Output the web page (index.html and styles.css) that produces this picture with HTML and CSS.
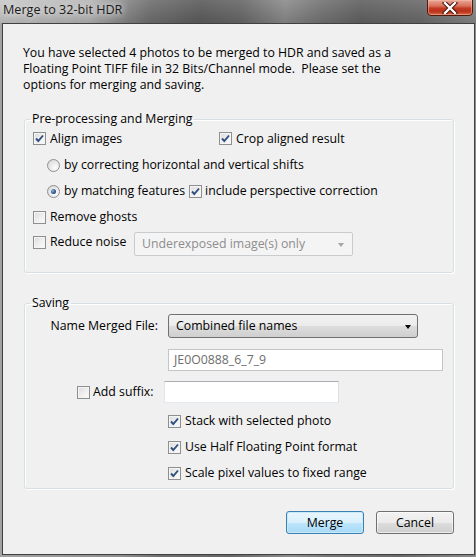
FILE: index.html
```html
<!DOCTYPE html>
<html lang="en">
<head>
    <meta charset="UTF-8">
    <title>Merge to 32-bit HDR</title>
    <link rel="stylesheet" href="styles.css">
</head>
<body>
    <div class="window">
        <div class="titlebar">
            <span class="title">Merge to 32-bit HDR</span>
            <span class="close">
                <svg width="16" height="12" viewBox="0 0 16 12">
                    <path d="M3 1 L13 11 M13 1 L3 11" stroke="#3a0c06" stroke-width="4.2" stroke-linecap="square"/>
                    <path d="M3 1 L13 11 M13 1 L3 11" stroke="#fff" stroke-width="2.4" stroke-linecap="square"/>
                </svg>
            </span>
        </div>

        <div class="client">
            <p class="intro">You have selected 4 photos to be merged to HDR and saved as a<br>Floating Point TIFF file in 32 Bits/Channel mode.&nbsp; Please set the<br>options for merging and saving.</p>

            <fieldset class="group group-merge">
                <legend>Pre-processing and Merging</legend>
                <div class="row row-first">
                    <label class="opt opt-align"><span class="cb"><svg width="11" height="11" viewBox="0 0 11 11"><path d="M2 5.5 L4.3 8 L9 2.5" fill="none" stroke="#2f4f7f" stroke-width="1.9"/></svg></span>Align images</label>
                    <label class="opt"><span class="cb"><svg width="11" height="11" viewBox="0 0 11 11"><path d="M2 5.5 L4.3 8 L9 2.5" fill="none" stroke="#2f4f7f" stroke-width="1.9"/></svg></span>Crop aligned result</label>
                </div>
                <div class="row indent">
                    <label class="opt"><span class="radio"></span>by correcting horizontal and vertical shifts</label>
                </div>
                <div class="row indent">
                    <label class="opt"><span class="radio on"></span>by matching features</label>
                    <label class="opt opt-persp"><span class="cb"><svg width="11" height="11" viewBox="0 0 11 11"><path d="M2 5.5 L4.3 8 L9 2.5" fill="none" stroke="#2f4f7f" stroke-width="1.9"/></svg></span>include perspective correction</label>
                </div>
                <div class="row">
                    <label class="opt"><span class="cb"></span>Remove ghosts</label>
                </div>
                <div class="row row-noise">
                    <label class="opt opt-noise"><span class="cb"></span>Reduce noise</label>
                    <div class="select disabled">Underexposed image(s) only<span class="arrow"></span></div>
                </div>
            </fieldset>

            <fieldset class="group group-save">
                <legend>Saving</legend>
                <div class="row row-name">
                    <span class="field-label">Name Merged File:</span>
                    <div class="select combo">Combined file names<span class="arrow"></span></div>
                </div>
                <div class="row row-file">
                    <div class="textbox readonly">JE0O0888_6_7_9</div>
                </div>
                <div class="row row-suffix">
                    <label class="opt opt-suffix"><span class="cb"></span>Add suffix:</label>
                    <div class="textbox suffix"></div>
                </div>
                <div class="row checks">
                    <label class="opt"><span class="cb"><svg width="11" height="11" viewBox="0 0 11 11"><path d="M2 5.5 L4.3 8 L9 2.5" fill="none" stroke="#2f4f7f" stroke-width="1.9"/></svg></span>Stack with selected photo</label>
                </div>
                <div class="row checks">
                    <label class="opt"><span class="cb"><svg width="11" height="11" viewBox="0 0 11 11"><path d="M2 5.5 L4.3 8 L9 2.5" fill="none" stroke="#2f4f7f" stroke-width="1.9"/></svg></span>Use Half Floating Point format</label>
                </div>
                <div class="row checks">
                    <label class="opt"><span class="cb"><svg width="11" height="11" viewBox="0 0 11 11"><path d="M2 5.5 L4.3 8 L9 2.5" fill="none" stroke="#2f4f7f" stroke-width="1.9"/></svg></span>Scale pixel values to fixed range</label>
                </div>
            </fieldset>

            <div class="buttons">
                <button type="button" class="btn btn-default">Merge</button>
                <button type="button" class="btn">Cancel</button>
            </div>
        </div>
    </div>
</body>
</html>
```

FILE: styles.css
```css
html, body {
    margin: 0;
    padding: 0;
}

body {
    width: 476px;
    height: 557px;
    overflow: hidden;
    font-family: "Open Sans", "Noto Sans", sans-serif;
    font-size: 12.3px;
    line-height: 16px;
    color: #000;
}

.window {
    height: 557px;
    box-sizing: border-box;
    padding: 0 1px 2px 2px;
    display: flex;
    flex-direction: column;
    background: linear-gradient(to right, #a3a3a3 0, #8f8f8f 120px, #6f6f6f 160px, #666 230px, #8c8c8c 290px, #777 330px, #6b6b6b 400px, #8a8a8a 476px);
}

/* title bar */
.titlebar {
    height: 23px;
    position: relative;
    margin: 0 -1px 0 -2px;
    background:
        linear-gradient(to bottom, rgba(255,255,255,0.08), rgba(0,0,0,0.12)),
        linear-gradient(to right, #c9c9c9 0, #b7b7b7 90px, #8a8a8a 125px, #727272 150px, #5f5f5f 200px, #6a6a6a 240px, #8e8e8e 285px, #777 320px, #646464 360px, #6d6d6d 420px, #8b8b8b 476px);
}

.title {
    display: block;
    padding: 2px 0 0 3px;
    font-size: 12.6px;
    color: #1b1b1b;
    text-shadow: 0 0 6px #e8e8e8, 0 0 10px #dcdcdc;
}

.close {
    position: absolute;
    top: -1px;
    right: 3px;
    width: 44px;
    height: 15px;
    border: 1px solid #4e1a10;
    border-radius: 0 0 4px 4px;
    background: linear-gradient(to bottom, #e7a898 0, #d9705a 40%, #c43a22 55%, #b9321c 75%, #d96a45 100%);
    box-shadow: inset 0 0 0 1px rgba(255,200,180,0.45);
    display: flex;
    align-items: center;
    justify-content: center;
}

/* client area */
.client {
    flex: 1;
    border: 1px solid #404040;
    background: #f0f0f0;
    padding: 21px 20px 20px 21px;
    display: flex;
    flex-direction: column;
}

.intro {
    margin: 0 0 18px -1px;
}

.group {
    margin: 0;
    padding: 0;
    border: 1px solid #d5dfe5;
    border-radius: 3px;
    box-shadow: inset 1px 1px 0 #fff, 1px 1px 0 #fff;
}

.group legend {
    margin-left: 5px;
    padding: 0 2px;
}

.row {
    display: flex;
    align-items: center;
    height: 26px;
    padding-left: 8px;
}

.row-first {
    height: 23px;
    padding-bottom: 2px;
}

.indent {
    padding-left: 22px;
}

.opt {
    display: flex;
    align-items: center;
    gap: 4px;
    white-space: nowrap;
}

.opt-align {
    width: 186px;
}

.opt-persp {
    margin-left: 4px;
    gap: 3px;
}

.opt-noise {
    width: 101px;
}

.row-noise {
    height: 28px;
    align-items: flex-start;
    margin-bottom: 14px;
}

.row-noise .opt {
    height: 24px;
}

.row-noise .select {
    margin-top: 2px;
}

/* checkbox and radio */
.cb {
    width: 11px;
    height: 11px;
    border: 1px solid #8e8f8f;
    background: linear-gradient(135deg, #dcdcdc 0, #f1f1f1 60%, #fbfbfb 100%);
    box-shadow: inset 0 0 0 1px #f4f4f4;
    display: inline-flex;
    flex: none;
}

.radio {
    width: 11px;
    height: 11px;
    border: 1px solid #8e8f8f;
    border-radius: 50%;
    background: radial-gradient(circle at 65% 70%, #fdfdfd 0, #e6e6e6 55%, #d2d2d2 100%);
    position: relative;
    flex: none;
}

.radio.on::after {
    content: "";
    position: absolute;
    left: 3px;
    top: 3px;
    width: 5px;
    height: 5px;
    border-radius: 50%;
    background: radial-gradient(circle at 35% 35%, #8cb4e0 0, #2b5287 60%, #1c3a66 100%);
}

/* dropdowns and text boxes */
.select {
    position: relative;
    box-sizing: border-box;
    height: 24px;
    line-height: 22px;
    padding-left: 7px;
    border-radius: 3px;
    white-space: nowrap;
}

.select .arrow {
    position: absolute;
    right: 6px;
    top: 10px;
    width: 0;
    height: 0;
    border-left: 3.5px solid transparent;
    border-right: 3.5px solid transparent;
    border-top: 4px solid #000;
}

.select.disabled {
    width: 219px;
    border: 1px solid #c9cccf;
    border-radius: 2px;
    background: #f4f4f4;
    color: #8d8d8d;
}

.select.disabled .arrow {
    border-top-color: #a5a5a5;
    right: 8px;
}

.select.combo {
    width: 250px;
    border: 1px solid #707070;
    background: linear-gradient(to bottom, #f2f2f2 0, #ebebeb 50%, #dddddd 51%, #cfcfcf 100%);
}

.row-name {
    margin-top: 3px;
    height: 24px;
    padding-left: 0;
}

.field-label {
    flex: none;
    width: 133px;
    margin-right: 10px;
    text-align: right;
    white-space: nowrap;
}

.textbox {
    box-sizing: border-box;
    height: 22px;
    line-height: 20px;
    padding-left: 5px;
    background: #fff;
    border: 1px solid;
    border-color: #abadb3 #dbdfe6 #e3e9ef #e2e3ea;
}

.textbox.readonly {
    width: 275px;
    border-color: #c5c5c5;
    color: #6d6d6d;
}

.row-file {
    margin-top: 11px;
    height: 22px;
    padding-left: 143px;
}

.row-suffix {
    margin-top: 10px;
    height: 22px;
    padding-left: 52px;
}

.opt-suffix {
    width: 87px;
    gap: 3px;
}

.textbox.suffix {
    width: 175px;
}

.checks {
    padding-left: 143px;
}

.row-suffix + .checks {
    margin-top: 5px;
}

.group-save {
    margin-top: 22px;
    padding-bottom: 2px;
}

/* buttons */
.buttons {
    display: flex;
    justify-content: flex-end;
    gap: 12px;
    margin-top: auto;
}

.btn {
    width: 78px;
    height: 23px;
    padding: 0;
    font-family: inherit;
    font-size: 12.3px;
    color: #000;
    border: 1px solid #707070;
    border-radius: 3px;
    background: linear-gradient(to bottom, #f2f2f2 0, #ebebeb 50%, #dddddd 51%, #cfcfcf 100%);
    box-shadow: inset 0 0 0 1px rgba(255,255,255,0.6);
}

.btn-default {
    border-color: #3c7fb1;
    background: linear-gradient(to bottom, #eaf6fd 0, #d9f0fc 50%, #bee6fd 51%, #a7d9f5 100%);
    box-shadow: inset 0 0 0 1px #c9eaf9;
}
```
